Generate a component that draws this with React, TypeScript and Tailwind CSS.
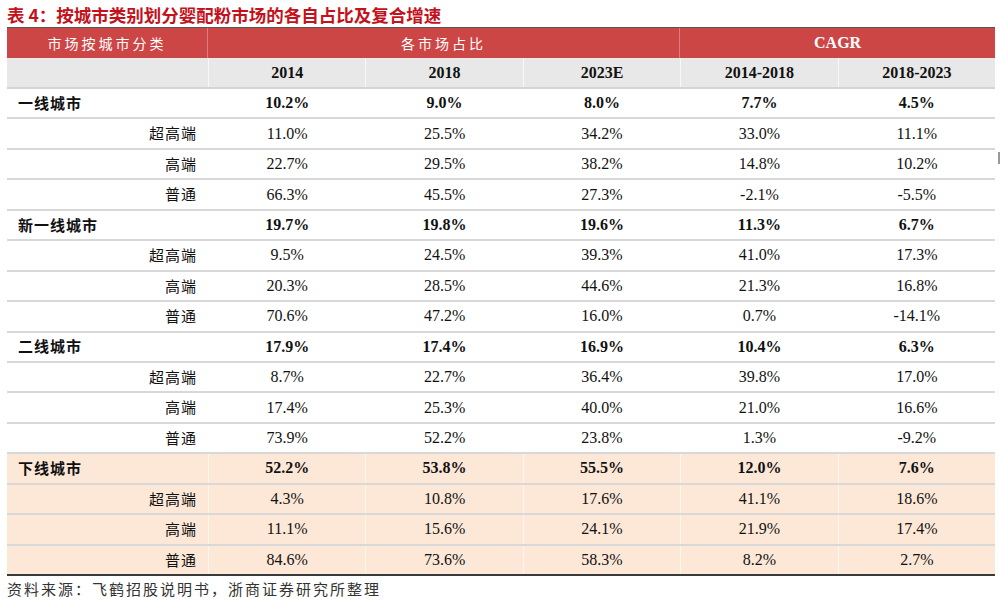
import React from 'react';

// 表格数据
type Row = { label: string; sub?: boolean; values: string[] };
type Group = { rows: Row[]; tint?: boolean };

const GROUPS: Group[] = [
  {
    rows: [
      { label: '一线城市', values: ['10.2%', '9.0%', '8.0%', '7.7%', '4.5%'] },
      { label: '超高端', sub: true, values: ['11.0%', '25.5%', '34.2%', '33.0%', '11.1%'] },
      { label: '高端', sub: true, values: ['22.7%', '29.5%', '38.2%', '14.8%', '10.2%'] },
      { label: '普通', sub: true, values: ['66.3%', '45.5%', '27.3%', '-2.1%', '-5.5%'] },
    ],
  },
  {
    rows: [
      { label: '新一线城市', values: ['19.7%', '19.8%', '19.6%', '11.3%', '6.7%'] },
      { label: '超高端', sub: true, values: ['9.5%', '24.5%', '39.3%', '41.0%', '17.3%'] },
      { label: '高端', sub: true, values: ['20.3%', '28.5%', '44.6%', '21.3%', '16.8%'] },
      { label: '普通', sub: true, values: ['70.6%', '47.2%', '16.0%', '0.7%', '-14.1%'] },
    ],
  },
  {
    rows: [
      { label: '二线城市', values: ['17.9%', '17.4%', '16.9%', '10.4%', '6.3%'] },
      { label: '超高端', sub: true, values: ['8.7%', '22.7%', '36.4%', '39.8%', '17.0%'] },
      { label: '高端', sub: true, values: ['17.4%', '25.3%', '40.0%', '21.0%', '16.6%'] },
      { label: '普通', sub: true, values: ['73.9%', '52.2%', '23.8%', '1.3%', '-9.2%'] },
    ],
  },
  {
    tint: true,
    rows: [
      { label: '下线城市', values: ['52.2%', '53.8%', '55.5%', '12.0%', '7.6%'] },
      { label: '超高端', sub: true, values: ['4.3%', '10.8%', '17.6%', '41.1%', '18.6%'] },
      { label: '高端', sub: true, values: ['11.1%', '15.6%', '24.1%', '21.9%', '17.4%'] },
      { label: '普通', sub: true, values: ['84.6%', '73.6%', '58.3%', '8.2%', '2.7%'] },
    ],
  },
];

const YEARS = ['2014', '2018', '2023E', '2014-2018', '2018-2023'];

const serif = "font-['Liberation_Serif','Noto_Sans_CJK_SC',serif]";
const cjk = "font-['Noto_Sans_CJK_SC',sans-serif]";
const grid = 'grid grid-cols-[201px_repeat(5,1fr)]';

const DataRow: React.FC<{ row: Row; tint?: boolean; last?: boolean }> = ({ row, tint, last }) => (
  <div
    className={`${grid} h-[30.45px] ${tint ? 'bg-[#fde8d8]' : 'bg-white'} ${
      last ? 'border-b-2 border-[#3a3a3a]' : 'border-b-2 border-[#d8d8d8]'
    }`}
  >
    <div
      className={`${cjk} flex items-center text-[15px] text-[#111] ${
        row.sub ? 'justify-end pr-[11px] tracking-[1px]' : 'pl-[11px] font-bold tracking-[1px]'
      }`}
    >
      {row.label}
    </div>
    {row.values.map((v, i) => (
      <div
        key={i}
        className={`${serif} flex items-center justify-center text-[16px] text-[#111] border-l border-white/60 ${
          row.sub ? '' : 'font-bold'
        }`}
      >
        {v}
      </div>
    ))}
  </div>
);

export default function App() {
  return (
    <div className="w-[1000px] h-[602px] bg-white overflow-hidden relative">
      {/* 标题 */}
      <div className="h-[27px] pl-[7px] pt-[2px] flex items-center">
        <span className={`${cjk} text-[17.5px] font-bold text-[#c3121c] leading-none`}>
          表 4：按城市类别划分婴配粉市场的各自占比及复合增速
        </span>
      </div>

      <div className="ml-[7px] w-[988px]">
        {/* 红色表头 */}
        <div className={`${grid} h-[31px] bg-[#cd4646] border-t border-[#555]`}>
          <div className={`${cjk} flex items-center justify-center text-[14px] tracking-[3px] text-white border-r border-white/30`}>
            市场按城市分类
          </div>
          <div className={`${cjk} col-span-3 flex items-center justify-center text-[14px] tracking-[3px] text-white border-r border-white/30`}>
            各市场占比
          </div>
          <div className={`${serif} col-span-2 flex items-center justify-center text-[16px] font-bold text-white`}>
            CAGR
          </div>
        </div>

        {/* 年份行 */}
        <div className={`${grid} h-[31px] bg-[#e8e8e8] border-b-2 border-[#d4d4d4]`}>
          <div />
          {YEARS.map((y) => (
            <div
              key={y}
              className={`${serif} flex items-center justify-center text-[16px] font-bold text-[#111] border-l border-white/70`}
            >
              {y}
            </div>
          ))}
        </div>

        {GROUPS.map((g, gi) =>
          g.rows.map((r, ri) => (
            <DataRow
              key={`${gi}-${ri}`}
              row={r}
              tint={g.tint}
              last={gi === GROUPS.length - 1 && ri === g.rows.length - 1}
            />
          ))
        )}
      </div>

      {/* 资料来源 */}
      <div className={`${cjk} pl-[7px] pt-[3px] text-[15px] tracking-[2px] text-[#333] leading-[20px]`}>
        资料来源：飞鹤招股说明书，浙商证券研究所整理
      </div>

      <div className="absolute left-[998px] top-[152px] w-[2px] h-[12px] bg-[#999]" />
    </div>
  );
}
